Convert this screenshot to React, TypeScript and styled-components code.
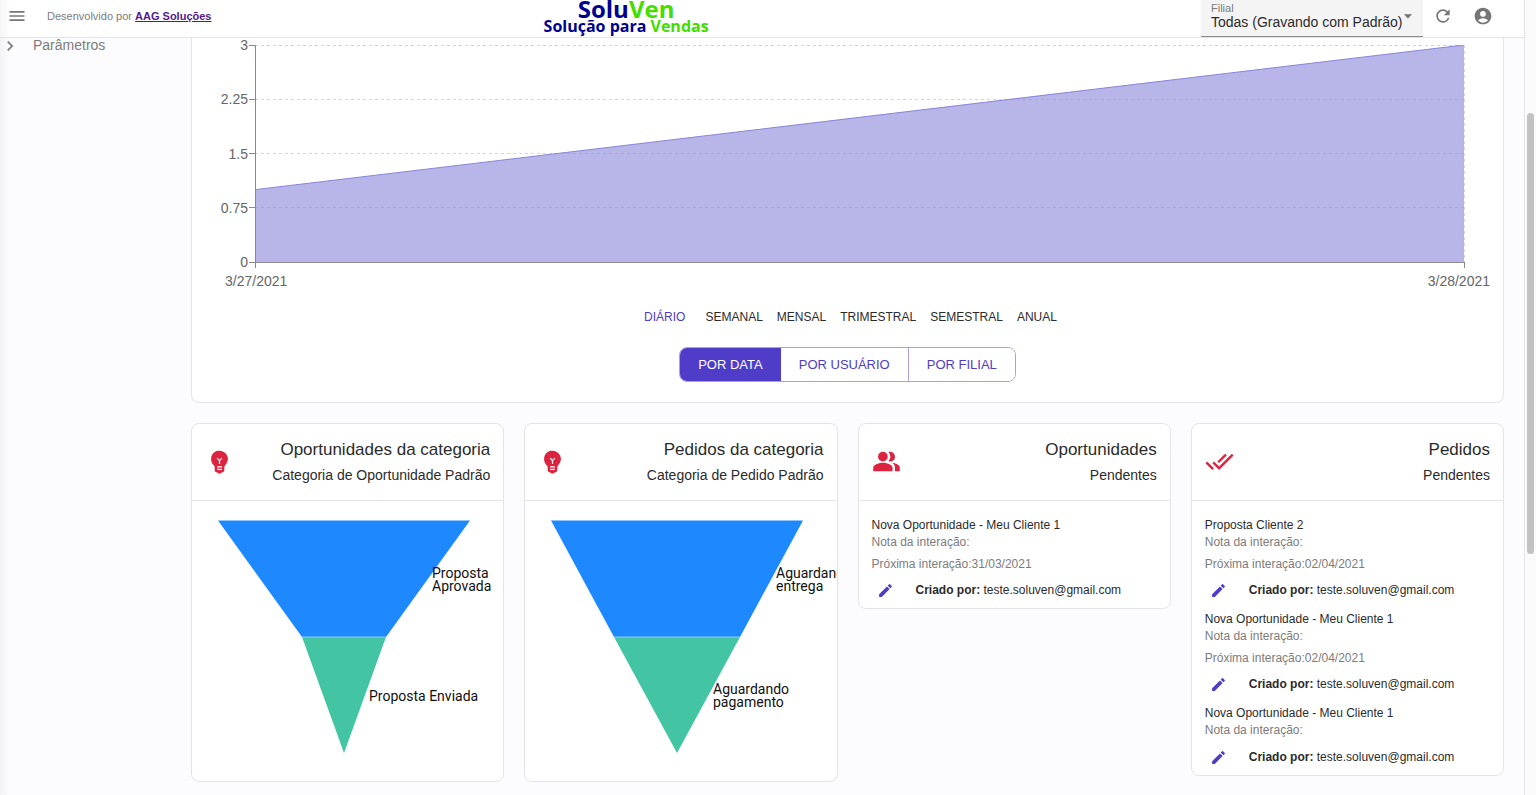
import React from "react";
import styled, { createGlobalStyle, css } from "styled-components";
import {
  MdAccountCircle,
  MdArrowDropDown,
  MdChevronRight,
  MdDoneAll,
  MdEdit,
  MdEmojiObjects,
  MdMenu,
  MdPeopleAlt,
  MdRefresh,
} from "react-icons/md";

const color = {
  page: "#fcfcfe",
  line: "#e4e4e6",
  text: "#2b2b2b",
  muted: "#7c7c7c",
  primary: "#4f3cc9",
  accent: "#dc2440",
};

const GlobalStyle = createGlobalStyle`
  *, *::before, *::after { box-sizing: border-box; }
  body {
    margin: 0;
    background: ${color.page};
    color: ${color.text};
    font-family: "Liberation Sans", Arial, sans-serif;
  }
  button, select { font-family: inherit; }
  h2, h3, p, ul { margin: 0; padding: 0; font-weight: 400; }
`;

const Screen = styled.div`
  display: flex;
  min-height: 100vh;
`;

const Content = styled.div`
  flex: 1;
  min-width: 0;
  background: linear-gradient(to right, #f3f3f5, ${color.page} 10px);
`;

const ScrollTrack = styled.div`
  width: 12px;
  flex: none;
  padding: 113px 2px 0;
  background: #fafafa;
  border-left: 1px solid ${color.line};
`;

const ScrollThumb = styled.div`
  width: 7px;
  height: 441px;
  border-radius: 4px;
  background: #c2c2c2;
`;

const Header = styled.header`
  display: grid;
  grid-template-columns: 2fr auto 3fr;
  height: 38px;
  overflow: hidden;
  background: linear-gradient(to right, #f5f5f5, #ffffff 10px);
  border-bottom: 1px solid ${color.line};
`;

const HeaderStart = styled.div`
  display: flex;
  align-items: center;
  gap: 20px;
  height: 32px;
  padding-left: 7px;
`;

const HeaderEnd = styled.div`
  display: flex;
  justify-content: flex-end;
  gap: 10px;
  padding-right: 31px;
`;

const HeaderActions = styled.div`
  display: flex;
  gap: 20px;
`;

const IconButton = styled.button`
  display: flex;
  align-items: center;
  justify-content: center;
  width: 20px;
  height: 32px;
  padding: 0;
  border: 0;
  background: none;
  color: #757575;
`;

const Credit = styled.p`
  font-size: 11px;
  line-height: 16px;
  color: ${color.muted};
`;

const CreditLink = styled.a`
  font-weight: 700;
  color: #551a8b;
`;

const Logo = styled.div`
  font-family: "Open Sans", "Noto Sans", sans-serif;
  font-weight: 700;
  text-align: center;
  color: #00008f;
`;

const LogoName = styled.div`
  font-size: 24px;
  line-height: 18px;
`;

const LogoTagline = styled.div`
  font-size: 16px;
  line-height: 16px;
`;

const Green = styled.span`
  color: #44dd00;
`;

const BranchField = styled.div`
  position: relative;
  width: 222px;
  height: 37px;
  background: #f4f4f4;
  border-bottom: 1px solid #8c8c8c;
`;

const BranchLabel = styled.label`
  position: absolute;
  top: 1px;
  left: 10px;
  font-size: 11px;
  line-height: 14px;
  color: ${color.muted};
`;

const BranchSelect = styled.select`
  width: 100%;
  height: 36px;
  padding: 10px 20px 2px 10px;
  border: 0;
  appearance: none;
  background: none;
  font-size: 14px;
  color: ${color.text};
`;

const BranchArrow = styled(MdArrowDropDown)`
  position: absolute;
  top: 6px;
  right: 5px;
  color: #757575;
  pointer-events: none;
`;

const Body = styled.div`
  display: grid;
  grid-template-columns: 191px minmax(0, 1fr);
  padding-right: 20px;
`;

const SidebarLink = styled.a`
  display: flex;
  align-items: center;
  gap: 13px;
  height: 15px;
  font-size: 14px;
  line-height: 15px;
  color: ${color.muted};
  text-decoration: none;
`;

const Main = styled.main`
  display: flex;
  flex-direction: column;
  gap: 20px;
`;

const panel = css`
  background: #ffffff;
  border: 1px solid ${color.line};
  overflow: hidden;
`;

const ChartPanel = styled.section`
  ${panel}
  border-top: 0;
  border-radius: 0 0 8px 8px;
  padding-bottom: 20px;
`;

const ChartArea = styled.div`
  display: grid;
  grid-template-columns: 63px minmax(0, 1fr);
  padding-right: 39px;
`;

const YAxis = styled.div`
  display: flex;
  flex-direction: column;
  justify-content: space-between;
`;

const YTick = styled.div`
  display: flex;
  align-items: center;
  justify-content: flex-end;
  gap: 1px;
  font-size: 14px;
  line-height: 14px;
  color: #666666;

  &::after {
    content: "";
    width: 6px;
    height: 1px;
    background: #8a8a8a;
  }
`;

const Plot = styled.svg`
  display: block;
  width: 100%;
  height: 217px;
  margin: 7px 0;
  overflow: visible;
`;

const XAxis = styled.div`
  display: flex;
  justify-content: space-between;
  padding: 4px 13px 0 33px;
  font-size: 14px;
  line-height: 16px;
  color: #666666;
`;

const Periods = styled.div`
  display: flex;
  justify-content: center;
  gap: 14px;
  padding: 20px 0 22px 6px;
`;

const PeriodButton = styled.button<{ $active?: boolean }>`
  padding: 0;
  margin-right: ${(p) => (p.$active ? "6px" : "0")};
  border: 0;
  background: none;
  font-size: 12px;
  line-height: 16px;
  color: ${(p) => (p.$active ? color.primary : color.text)};
`;

const ToggleGroup = styled.div`
  display: flex;
  width: max-content;
  margin: 0 auto;
  border: 1px solid #a9a0e2;
  border-radius: 8px;
  overflow: hidden;
`;

const ToggleButton = styled.button<{ $active?: boolean }>`
  height: 33px;
  padding: 0 18px;
  border: 0;
  font-size: 13px;
  background: ${(p) => (p.$active ? color.primary : "#ffffff")};
  color: ${(p) => (p.$active ? "#ffffff" : color.primary)};

  & + & + & {
    border-left: 1px solid #a9a0e2;
  }
`;

const Cards = styled.div`
  display: grid;
  grid-template-columns: repeat(4, minmax(0, 1fr));
  align-items: start;
  gap: 20px;
`;

const CardBox = styled.section`
  ${panel}
  border-radius: 8px;
`;

const CardHeader = styled.header`
  display: flex;
  align-items: center;
  justify-content: space-between;
  padding: 13px;
  border-bottom: 1px solid ${color.line};
  color: ${color.accent};

  > svg {
    margin-bottom: 2px;
  }
`;

const CardHeading = styled.div`
  text-align: right;
  color: ${color.text};
`;

const CardTitle = styled.h2`
  font-size: 17px;
  line-height: 26px;
`;

const CardSubtitle = styled.h3`
  font-size: 14px;
  line-height: 24px;
`;

const FunnelSvg = styled.svg`
  display: block;
  width: 100%;
  height: 280px;
`;

const FunnelText = styled.text`
  font-family: Roboto, "Liberation Sans", sans-serif;
  font-size: 14px;
  fill: #111111;
`;

const List = styled.ul`
  display: flex;
  flex-direction: column;
  gap: 3px;
  padding: 16px 13px 0;
  list-style: none;
`;

const ItemLine = styled.p<{ $muted?: boolean; $spaced?: boolean }>`
  margin-top: ${(p) => (p.$spaced ? "5px" : "0")};
  font-size: 12px;
  line-height: ${(p) => (p.$spaced ? "16px" : "17px")};
  color: ${(p) => (p.$muted ? color.muted : color.text)};
`;

const ItemFooter = styled.div`
  display: flex;
  align-items: center;
  gap: 20px;
  height: 36px;
  padding-left: 4px;
  font-size: 12px;
`;

const EditButton = styled(IconButton)`
  color: ${color.primary};
`;

type Funnel = {
  name: string;
  mid: [number, number];
  labels: { x: number; y: number; lines: string[] }[];
};

const opportunityFunnel: Funnel = {
  name: "Oportunidades da categoria",
  mid: [110, 194],
  labels: [
    { x: 240, y: 77, lines: ["Proposta", "Aprovada"] },
    { x: 177, y: 200, lines: ["Proposta Enviada"] },
  ],
};

const orderFunnel: Funnel = {
  name: "Pedidos da categoria",
  mid: [89, 215],
  labels: [
    { x: 251, y: 77, lines: ["Aguardando", "entrega"] },
    { x: 188, y: 193, lines: ["Aguardando", "pagamento"] },
  ],
};

function FunnelChart({ name, mid, labels }: Funnel) {
  return (
    <FunnelSvg role="img" aria-label={name}>
      <polygon points={`26,19.5 278,19.5 ${mid[1]},136 ${mid[0]},136`} fill="#1e88ff" />
      <polygon points={`${mid[0]},136 ${mid[1]},136 152,252`} fill="#43c4a2" />
      <line x1={mid[0]} x2={mid[1]} y1="136" y2="136" stroke="#8fd0f0" />
      {labels.map((label) => (
        <FunnelText key={label.y} x={label.x} y={label.y}>
          {label.lines.map((line, i) => (
            <tspan key={line} x={label.x} dy={i === 0 ? 0 : 13}>
              {line}
            </tspan>
          ))}
        </FunnelText>
      ))}
    </FunnelSvg>
  );
}

type Item = { title: string; next?: string };

function Card(props: { icon: React.ReactNode; title: string; subtitle: string; children: React.ReactNode }) {
  return (
    <CardBox>
      <CardHeader>
        {props.icon}
        <CardHeading>
          <CardTitle>{props.title}</CardTitle>
          <CardSubtitle>{props.subtitle}</CardSubtitle>
        </CardHeading>
      </CardHeader>
      {props.children}
    </CardBox>
  );
}

function PendingList({ items }: { items: Item[] }) {
  return (
    <List>
      {items.map((item, i) => (
        <li key={i}>
          <ItemLine>{item.title}</ItemLine>
          <ItemLine $muted>Nota da interação:</ItemLine>
          {item.next && (
            <ItemLine $muted $spaced>
              Próxima interação:{item.next}
            </ItemLine>
          )}
          <ItemFooter>
            <EditButton type="button" aria-label="Editar">
              <MdEdit size={17} />
            </EditButton>
            <span>
              <b>Criado por:</b> teste.soluven@gmail.com
            </span>
          </ItemFooter>
        </li>
      ))}
    </List>
  );
}

const yTicks = ["3", "2.25", "1.5", "0.75", "0"];
const periods = ["DIÁRIO", "SEMANAL", "MENSAL", "TRIMESTRAL", "SEMESTRAL", "ANUAL"];
const groupings = ["POR DATA", "POR USUÁRIO", "POR FILIAL"];

function AreaChart() {
  return (
    <>
      <ChartArea>
        <YAxis>
          {yTicks.map((t) => (
            <YTick key={t}>{t}</YTick>
          ))}
        </YAxis>
        <Plot role="img" aria-label="Total por data">
          <g stroke="#d4d4d4" strokeDasharray="3 3" shapeRendering="crispEdges">
            {["0%", "25%", "50%", "75%"].map((y) => (
              <line key={y} x1="0" x2="100%" y1={y} y2={y} />
            ))}
          </g>
          <svg width="100%" height="100%" viewBox="0 0 100 3" preserveAspectRatio="none">
            <polygon points="0,2 100,0 100,3 0,3" fill="#8884d8" fillOpacity="0.6" />
            <line x1="0" y1="2" x2="100" y2="0" stroke="#8884d8" vectorEffect="non-scaling-stroke" />
          </svg>
          <line x1="100%" x2="100%" y1="0" y2="100%" stroke="#b0acdf" strokeDasharray="3 3" />
          <g stroke="#8a8a8a" shapeRendering="crispEdges">
            <line x1="0" x2="0" y1="0" y2="223" />
            <line x1="0" x2="100%" y1="217" y2="217" />
            <line x1="100%" x2="100%" y1="217" y2="223" />
          </g>
        </Plot>
      </ChartArea>
      <XAxis>
        <span>3/27/2021</span>
        <span>3/28/2021</span>
      </XAxis>
    </>
  );
}

export default function App() {
  return (
    <Screen>
      <GlobalStyle />
      <Content>
        <Header>
          <HeaderStart>
            <IconButton type="button" aria-label="Menu">
              <MdMenu size={20} />
            </IconButton>
            <Credit>
              Desenvolvido por <CreditLink href="#aag">AAG Soluções</CreditLink>
            </Credit>
          </HeaderStart>
          <Logo>
            <LogoName>
              Solu<Green>Ven</Green>
            </LogoName>
            <LogoTagline>
              Solução para <Green>Vendas</Green>
            </LogoTagline>
          </Logo>
          <HeaderEnd>
            <BranchField>
              <BranchLabel htmlFor="branch">Filial</BranchLabel>
              <BranchSelect id="branch">
                <option>Todas (Gravando com Padrão)</option>
              </BranchSelect>
              <BranchArrow size={20} />
            </BranchField>
            <HeaderActions>
              <IconButton type="button" aria-label="Atualizar">
                <MdRefresh size={20} />
              </IconButton>
              <IconButton type="button" aria-label="Conta">
                <MdAccountCircle size={20} />
              </IconButton>
            </HeaderActions>
          </HeaderEnd>
        </Header>
        <Body>
          <nav>
            <SidebarLink href="#parametros">
              <MdChevronRight size={20} />
              Parâmetros
            </SidebarLink>
          </nav>
          <Main>
            <ChartPanel>
              <AreaChart />
              <Periods>
                {periods.map((p, i) => (
                  <PeriodButton key={p} type="button" $active={i === 0}>
                    {p}
                  </PeriodButton>
                ))}
              </Periods>
              <ToggleGroup>
                {groupings.map((g, i) => (
                  <ToggleButton key={g} type="button" $active={i === 0}>
                    {g}
                  </ToggleButton>
                ))}
              </ToggleGroup>
            </ChartPanel>
            <Cards>
              <Card
                icon={<MdEmojiObjects size={29} />}
                title="Oportunidades da categoria"
                subtitle="Categoria de Oportunidade Padrão"
              >
                <FunnelChart {...opportunityFunnel} />
              </Card>
              <Card
                icon={<MdEmojiObjects size={29} />}
                title="Pedidos da categoria"
                subtitle="Categoria de Pedido Padrão"
              >
                <FunnelChart {...orderFunnel} />
              </Card>
              <Card icon={<MdPeopleAlt size={29} />} title="Oportunidades" subtitle="Pendentes">
                <PendingList items={[{ title: "Nova Oportunidade - Meu Cliente 1", next: "31/03/2021" }]} />
              </Card>
              <Card icon={<MdDoneAll size={29} />} title="Pedidos" subtitle="Pendentes">
                <PendingList
                  items={[
                    { title: "Proposta Cliente 2", next: "02/04/2021" },
                    { title: "Nova Oportunidade - Meu Cliente 1", next: "02/04/2021" },
                    { title: "Nova Oportunidade - Meu Cliente 1" },
                  ]}
                />
              </Card>
            </Cards>
          </Main>
        </Body>
      </Content>
      <ScrollTrack aria-hidden="true">
        <ScrollThumb />
      </ScrollTrack>
    </Screen>
  );
}
